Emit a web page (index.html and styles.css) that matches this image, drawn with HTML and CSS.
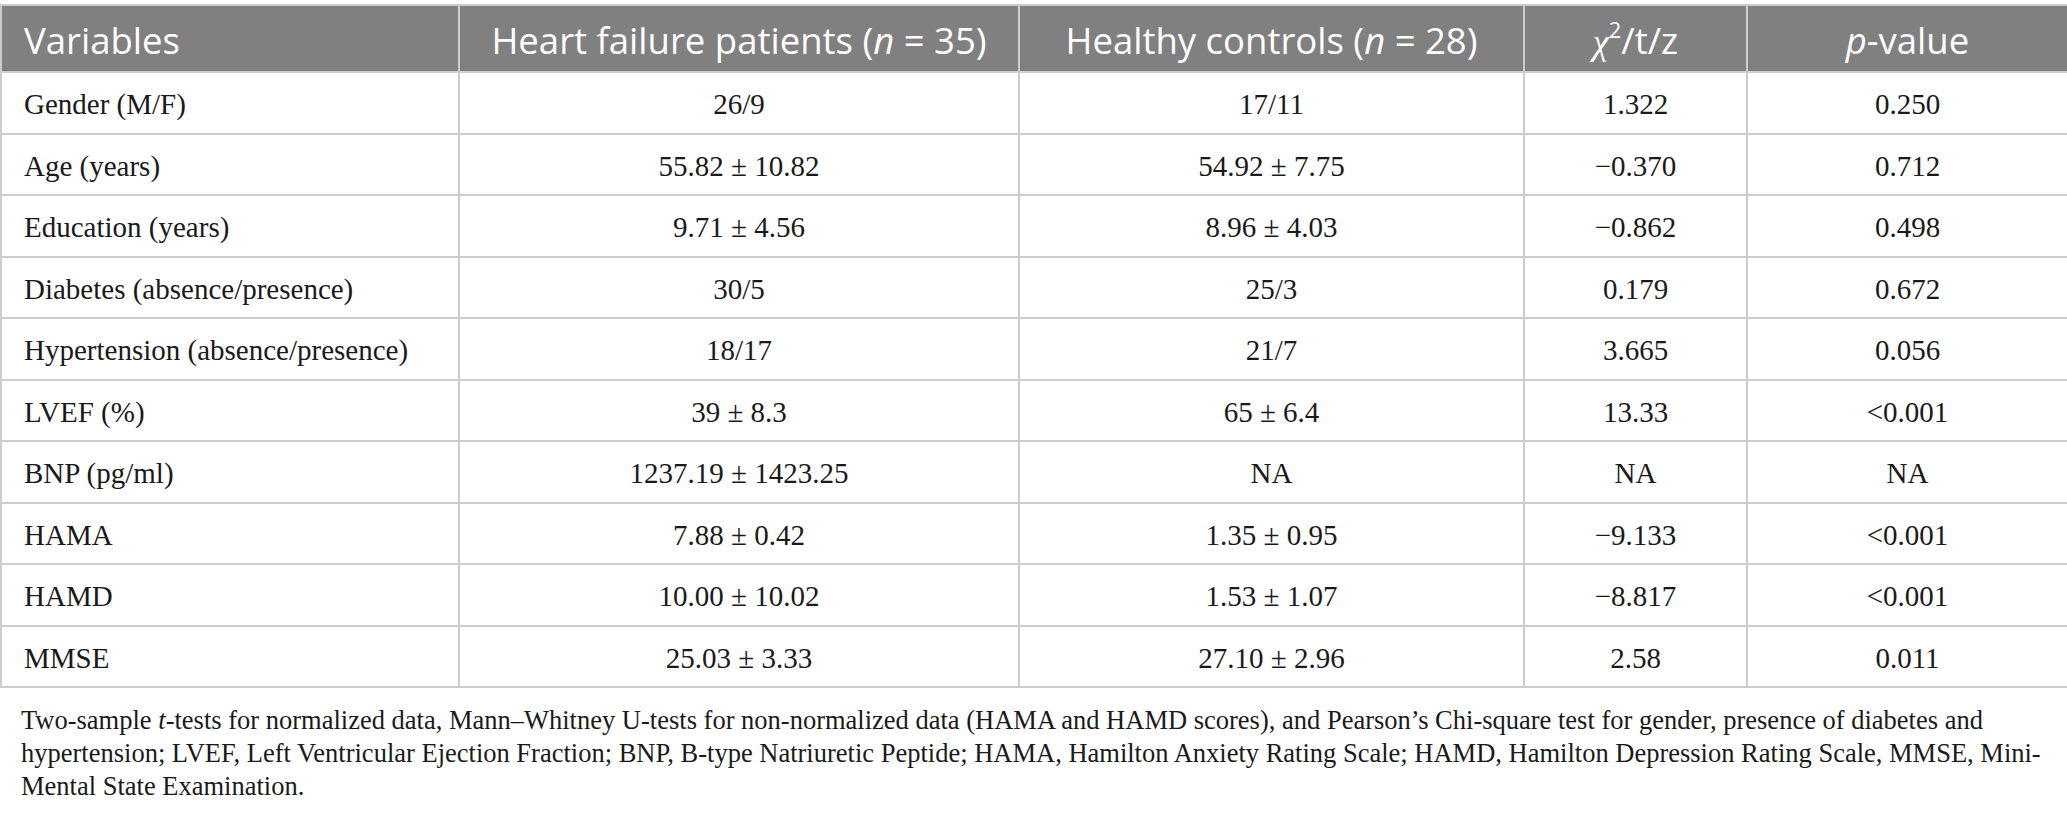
FILE: index.html
```html
<!DOCTYPE html>
<html lang="en">
<head>
<meta charset="utf-8">
<title>Table</title>
<link rel="stylesheet" href="styles.css">
</head>
<body>
<div class="page">
  <table class="data">
    <colgroup>
      <col class="c1"><col class="c2"><col class="c3"><col class="c4"><col class="c5">
    </colgroup>
    <thead>
      <tr>
        <th class="left">Variables</th>
        <th>Heart failure patients (<i>n</i> = 35)</th>
        <th>Healthy controls (<i>n</i> = 28)</th>
        <th><span class="chi">χ</span><sup>2</sup>/t/z</th>
        <th><i>p</i>-value</th>
      </tr>
    </thead>
    <tbody>
      <tr><td class="left">Gender (M/F)</td><td>26/9</td><td>17/11</td><td>1.322</td><td>0.250</td></tr>
      <tr><td class="left">Age (years)</td><td>55.82 ± 10.82</td><td>54.92 ± 7.75</td><td>−0.370</td><td>0.712</td></tr>
      <tr><td class="left">Education (years)</td><td>9.71 ± 4.56</td><td>8.96 ± 4.03</td><td>−0.862</td><td>0.498</td></tr>
      <tr><td class="left">Diabetes (absence/presence)</td><td>30/5</td><td>25/3</td><td>0.179</td><td>0.672</td></tr>
      <tr><td class="left">Hypertension (absence/presence)</td><td>18/17</td><td>21/7</td><td>3.665</td><td>0.056</td></tr>
      <tr><td class="left">LVEF (%)</td><td>39 ± 8.3</td><td>65 ± 6.4</td><td>13.33</td><td>&lt;0.001</td></tr>
      <tr><td class="left">BNP (pg/ml)</td><td>1237.19 ± 1423.25</td><td>NA</td><td>NA</td><td>NA</td></tr>
      <tr><td class="left">HAMA</td><td>7.88 ± 0.42</td><td>1.35 ± 0.95</td><td>−9.133</td><td>&lt;0.001</td></tr>
      <tr><td class="left">HAMD</td><td>10.00 ± 10.02</td><td>1.53 ± 1.07</td><td>−8.817</td><td>&lt;0.001</td></tr>
      <tr><td class="left">MMSE</td><td>25.03 ± 3.33</td><td>27.10 ± 2.96</td><td>2.58</td><td>0.011</td></tr>
    </tbody>
  </table>
  <p class="note">Two-sample <i>t</i>-tests for normalized data, Mann–Whitney U-tests for non-normalized data (HAMA and HAMD scores), and Pearson’s Chi-square test for gender, presence of diabetes and hypertension; LVEF, Left Ventricular Ejection Fraction; BNP, B-type Natriuretic Peptide; HAMA, Hamilton Anxiety Rating Scale; HAMD, Hamilton Depression Rating Scale, MMSE, Mini-Mental State Examination.</p>
</div>
</body>
</html>
```
FILE: styles.css
```css
html, body {
  margin: 0;
  padding: 0;
  background: #ffffff;
}

.page {
  padding-top: 4px;
  width: 2067px;
}

.data {
  width: 2067px;
  border-collapse: collapse;
  table-layout: fixed;
  font-family: "Liberation Serif", "Times New Roman", serif;
  font-size: 29px;
  color: #1a1a1a;
}

.c1 { width: 458px; }
.c2 { width: 560px; }
.c3 { width: 505px; }
.c4 { width: 223px; }
.c5 { width: 321px; }

.data th,
.data td {
  border: 2px solid #cccccc;
  text-align: center;
  vertical-align: middle;
  padding: 0 22px;
  white-space: nowrap;
}

.data th {
  background: #808080;
  color: #ffffff;
  font-family: "Open Sans", "Noto Sans", sans-serif;
  font-weight: 400;
  font-size: 36.5px;
  height: 67px;
  box-sizing: border-box;
  padding-top: 2px;
}

.data td {
  height: 61.5px;
  box-sizing: border-box;
  padding-top: 4px;
}

.data .left {
  text-align: left;
}

.chi {
  font-family: "Liberation Serif", serif;
  font-style: italic;
}

.data sup {
  font-size: 60%;
  line-height: 0;
  vertical-align: 0.75em;
}

.note {
  margin: 16px 0 0 0;
  padding: 0 21px;
  font-family: "Liberation Serif", "Times New Roman", serif;
  font-size: 26.5px;
  line-height: 33px;
  color: #1a1a1a;
}
```
